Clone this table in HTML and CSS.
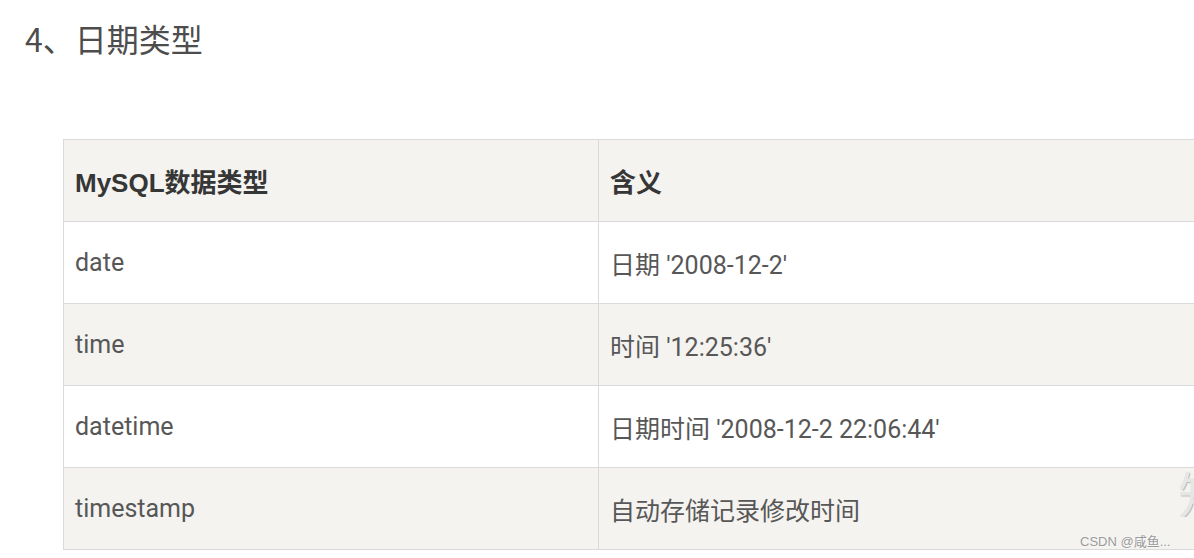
FILE: index.html
```html
<!DOCTYPE html>
<html lang="zh">
<head>
<meta charset="utf-8">
<title>日期类型</title>
<link rel="stylesheet" href="styles.css">
</head>
<body>
<div class="page">
  <h2 class="title">4、日期类型</h2>
  <div class="figure">
    <table class="types">
      <thead>
        <tr><th class="c1">MySQL数据类型</th><th class="c2">含义</th></tr>
      </thead>
      <tbody>
        <tr><td>date</td><td>日期 '2008-12-2'</td></tr>
        <tr class="alt"><td>time</td><td>时间 '12:25:36'</td></tr>
        <tr><td>datetime</td><td>日期时间 '2008-12-2 22:06:44'</td></tr>
        <tr class="alt"><td>timestamp</td><td>自动存储记录修改时间</td></tr>
      </tbody>
    </table>
    <span class="ghost" aria-hidden="true">知</span>
    <span class="mark">CSDN @咸鱼...</span>
  </div>
</div>
</body>
</html>
```

FILE: styles.css
```css
html, body {
  margin: 0;
  padding: 0;
  background: #fff;
  overflow: hidden;
}
.page {
  width: 1194px;
  height: 558px;
  overflow: hidden;
  position: relative;
}
.title {
  margin: 0;
  padding: 17px 0 0 25px;
  font-family: "Noto Sans CJK SC", "Noto Sans", sans-serif;
  font-weight: 400;
  font-size: 32px;
  line-height: 42px;
  color: #4d4d4d;
}
.figure {
  position: relative;
  margin: 80px 0 0 63px;
  width: 1160px;
}
.types {
  border-collapse: collapse;
  width: 1160px;
  table-layout: fixed;
  font-family: Roboto, "Liberation Sans", "Noto Sans CJK SC", sans-serif;
  font-size: 25px;
  color: #575757;
}
.types th, .types td {
  border: 1px solid #dadada;
  height: 82px;
  padding: 0 0 0 11px;
  text-align: left;
  vertical-align: middle;
  box-sizing: border-box;
}
.types th {
  background: #f4f3f0;
  color: #363636;
  font-weight: 700;
  font-size: 26px;
  font-family: "Liberation Sans", "Noto Sans CJK SC", sans-serif;
}
.types .c1 { width: 535px; }
.types tr.alt td { background: #f4f3f0; }
.ghost {
  position: absolute;
  top: 328px;
  left: 1115px;
  width: 16px;
  overflow: hidden;
  font-family: "Noto Sans CJK SC", sans-serif;
  font-size: 50px;
  color: #e6e6e4;
  text-shadow: 1px 1px 1px #bbb;
  line-height: 1;
}
.mark {
  position: absolute;
  left: 1017px;
  top: 392px;
  font-family: "Liberation Sans", "Noto Sans CJK SC", sans-serif;
  font-size: 13px;
  color: #9a9a9a;
  text-shadow: 0 0 2px #fff;
}
```
